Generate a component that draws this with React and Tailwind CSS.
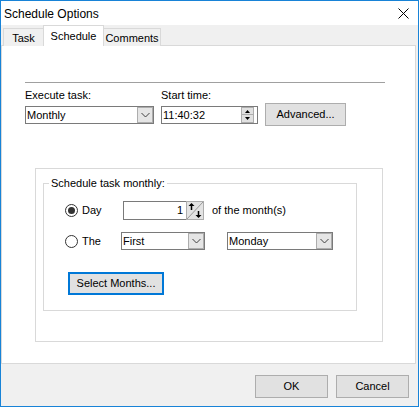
import React from "react";

const font = { fontFamily: '"Liberation Sans", Arial, sans-serif' };

function Chevron() {
  return (
    <svg width="9" height="6" viewBox="0 0 9 6">
      <path d="M0.5 1 L4.5 5 L8.5 1" fill="none" stroke="#404040" strokeWidth="1" />
    </svg>
  );
}

function Combo({ value, width }) {
  return (
    <div className={`flex h-[18px] border border-[#7a7a7a] bg-white ${width}`}>
      <div className="flex-1 pl-[1px] text-[11px] leading-[16px] text-black">{value}</div>
      <div className="w-[16px] h-[16px] border border-[#adadad] bg-[#e5e5e5] flex items-center justify-center">
        <Chevron />
      </div>
    </div>
  );
}

function Radio({ checked }) {
  return (
    <div className="w-[13px] h-[13px] rounded-full border border-[#333333] bg-white flex items-center justify-center">
      {checked && <div className="w-[7px] h-[7px] rounded-full bg-[#333333]" />}
    </div>
  );
}

function Button({ children, className = "" }) {
  return (
    <div
      className={`flex items-center justify-center border border-[#adadad] bg-[#e1e1e1] text-[11px] text-black ${className}`}
    >
      {children}
    </div>
  );
}

export default function App() {
  return (
    <div
      style={font}
      className="w-[419px] h-[407px] border border-[#1883d7] bg-[#f0f0f0] flex flex-col overflow-hidden text-black"
    >
      {/* Title bar */}
      <div className="h-[24px] bg-white flex items-center justify-between pl-[3px] pr-[9px]">
        <span className="text-[12px] leading-[16px] mt-[2px]">Schedule Options</span>
        <svg width="11" height="11" viewBox="0 0 11 11" className="mt-[1px]">
          <path d="M0.5 0.5 L10.5 10.5 M10.5 0.5 L0.5 10.5" stroke="#000" strokeWidth="1" />
        </svg>
      </div>

      {/* Tabs */}
      <div className="h-[20px] flex items-end pl-[2px] relative z-10">
        <div className="w-[41px] h-[18px] mb-[-1px] border border-b-0 border-[#d9d9d9] bg-[#f0f0f0] flex items-center justify-center text-[11px] pt-[1px]">
          Task
        </div>
        <div className="w-[61px] h-[21px] mb-[-1px] ml-[-1px] border border-b-0 border-[#d9d9d9] bg-white flex items-start justify-center text-[11px] pt-[2px]">
          Schedule
        </div>
        <div className="w-[58px] h-[18px] mb-[-1px] ml-[-1px] border border-b-0 border-[#d9d9d9] bg-[#f0f0f0] flex items-center justify-center text-[11px] pt-[1px]">
          Comments
        </div>
      </div>

      {/* Page */}
      <div className="h-[319px] mr-[2px] border border-[#d9d9d9] bg-white pl-[23px] pt-[36px]">
        <div className="h-px w-[360px] bg-[#a0a0a0]" />
        <div className="mt-[6px] flex">
          <div className="w-[129px]">
            <div className="h-[17px] text-[11px] leading-[13px]">Execute task:</div>
            <Combo value="Monthly" width="w-[129px]" />
          </div>
          <div className="ml-[7px] w-[97px]">
            <div className="h-[17px] text-[11px] leading-[13px]">Start time:</div>
            <div className="flex h-[18px] border border-[#7a7a7a] bg-white items-center">
              <div className="flex-1 pl-[1px] text-[11px] leading-[16px]">11:40:32</div>
              <div className="w-[13px] h-[16px] mr-[3px] flex flex-col">
                <div className="h-[8px] border border-[#adadad] bg-[#e1e1e1] flex items-center justify-center">
                  <svg width="5" height="3" viewBox="0 0 5 3"><path d="M0 3 L2.5 0 L5 3 Z" fill="#000" /></svg>
                </div>
                <div className="h-[8px] border border-t-0 border-[#adadad] bg-[#e1e1e1] flex items-center justify-center">
                  <svg width="5" height="3" viewBox="0 0 5 3"><path d="M0 0 L2.5 3 L5 0 Z" fill="#000" /></svg>
                </div>
              </div>
            </div>
          </div>
          <div className="ml-[7px] mt-[14px]">
            <Button className="w-[81px] h-[23px]">Advanced...</Button>
          </div>
        </div>

        {/* Outer panel */}
        <div className="mt-[42px] ml-[10px] w-[348px] h-[174px] border border-[#d9d9d9] pl-[7px] pt-[14px]">
          <div className="relative w-[314px] h-[128px] border border-[#d9d9d9] pl-[21px] pt-[17px]">
            <span className="absolute top-[-7px] left-[5px] px-[2px] bg-white text-[11px] leading-[13px]">
              Schedule task monthly:
            </span>
            {/* Row 1 */}
            <div className="flex items-center h-[19px]">
              <div className="w-[58px] flex items-center">
                <Radio checked />
                <span className="ml-[4px] text-[11px] leading-[13px]">Day</span>
              </div>
              <div className="flex h-[19px]">
                <div className="w-[64px] h-[19px] border border-[#7a7a7a] bg-white text-right pr-[3px] text-[11px] leading-[17px]">
                  1
                </div>
                <svg width="18" height="19" viewBox="0 0 18 19" className="ml-[-1px]">
                  <rect x="0.5" y="0.5" width="17" height="18" fill="#e3e3e3" stroke="#adadad" />
                  <path d="M1 18 L17 1" stroke="#9a9a9a" strokeWidth="1" />
                  <path d="M5.5 9 L5.5 3" stroke="#000" strokeWidth="1.5" />
                  <path d="M2.5 5 L5.5 2 L8.5 5 Z" fill="#000" />
                  <path d="M12.5 10 L12.5 16" stroke="#000" strokeWidth="1.5" />
                  <path d="M9.5 14 L12.5 17 L15.5 14 Z" fill="#000" />
                </svg>
              </div>
              <span className="ml-[8px] text-[11px] leading-[13px]">of the month(s)</span>
            </div>
            {/* Row 2 */}
            <div className="flex items-center h-[18px] mt-[12px]">
              <div className="w-[56px] flex items-center">
                <Radio />
                <span className="ml-[4px] text-[11px] leading-[13px]">The</span>
              </div>
              <Combo value="First" width="w-[84px]" />
              <div className="ml-[22px]">
                <Combo value="Monday" width="w-[106px]" />
              </div>
            </div>
            {/* Select months */}
            <div className="mt-[22px] ml-[3px]">
              <div className="w-[96px] h-[23px] border-2 border-[#0078d7] bg-[#e1e1e1] flex items-center justify-center text-[11px]">
                Select Months...
              </div>
            </div>
          </div>
        </div>
      </div>

      {/* Bottom bar */}
      <div className="flex-1 flex justify-end items-start pt-[11px] pr-[9px] gap-[8px]">
        <Button className="w-[73px] h-[23px]">OK</Button>
        <Button className="w-[73px] h-[23px]">Cancel</Button>
      </div>
    </div>
  );
}
